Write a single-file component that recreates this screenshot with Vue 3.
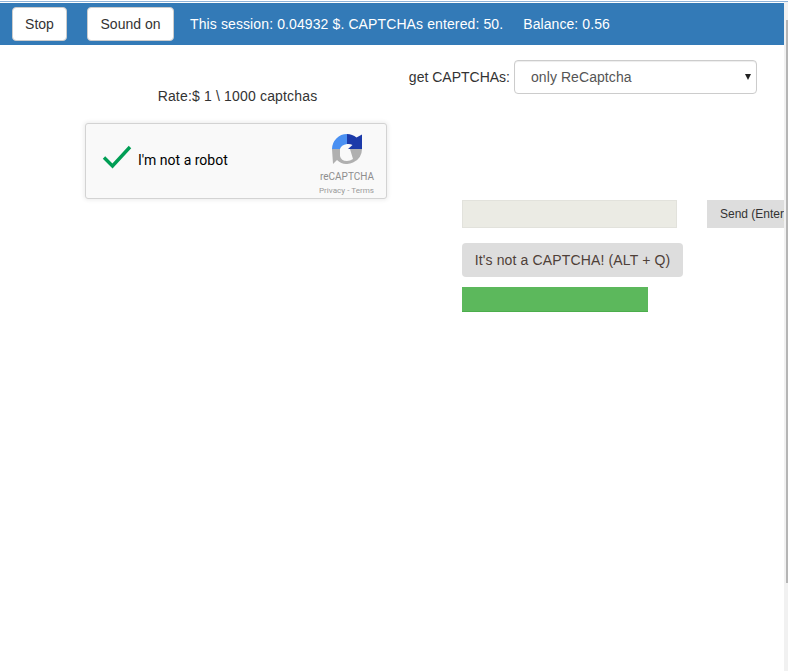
<script setup>
const stats = 'This session: 0.04932 $. CAPTCHAs entered: 50.'
</script>

<template>
  <div class="page">
    <div class="topline"></div>
    <div class="row">
      <main class="content">
        <header class="bar">
          <button class="btn stop" type="button">Stop</button>
          <button class="btn sound" type="button">Sound on</button>
          <span class="stats">{{ stats }}</span>
          <span class="balance">Balance: 0.56</span>
        </header>

        <div class="columns">
          <section class="left">
            <p class="rate">Rate:$ 1 \ 1000 captchas</p>
            <div class="recaptcha">
              <svg class="check" viewBox="0 0 30 24" width="30" height="24">
                <path d="M2 12.5 L10.5 21 L28 2" fill="none" stroke="#009e55" stroke-width="3.4" />
              </svg>
              <span class="robot">I'm not a robot</span>
              <div class="brand">
                <svg class="logo" viewBox="0 0 30 30" width="30" height="30">
                  <path d="M15 0 A15 15 0 0 0 0 15 H8 Q9 11 15 10 Z" fill="#4a90f2" />
                  <path d="M15 0 A15 15 0 0 1 24.5 3.5 L30 0.5 V15 H16 L20.5 11 Q18 9.5 15 10 Z" fill="#1c3aa9" />
                  <path d="M0 15 H8 V22 Q9 27 15 27 Q18 27 21 25 L18 15 H30 A15 15 0 0 1 5 26 L1 30 Z" fill="#b0b0b0" />
                </svg>
                <span class="brand-name">reCAPTCHA</span>
                <span class="brand-links">Privacy - Terms</span>
              </div>
            </div>
          </section>

          <section class="right">
            <div class="picker">
              <label class="picker-label" for="mode">get CAPTCHAs:</label>
              <div class="select" id="mode">
                <span class="select-value">only ReCaptcha</span>
                <span class="caret"></span>
              </div>
            </div>
            <div class="answer">
              <div class="field"></div>
              <button class="send" type="button">Send (Enter)</button>
            </div>
            <button class="skip" type="button">It's not a CAPTCHA! (ALT + Q)</button>
            <div class="progress"></div>
          </section>
        </div>
      </main>
      <aside class="scrollbar"><div class="thumb"></div></aside>
    </div>
  </div>
</template>

<style>
html, body { margin: 0; background: #fff; overflow: hidden; }
</style>

<style scoped>
.page {
  width: 788px;
  height: 671px;
  display: flex;
  flex-direction: column;
  overflow: hidden;
  background: #fff;
  font-family: "Liberation Sans", Arial, sans-serif;
  font-size: 14px;
  color: #333;
}
.topline { height: 1px; margin-top: 1px; background: #8fb3d9; flex: none; }
.row { display: flex; flex: 1; min-height: 0; }
.content {
  width: 784px;
  flex: none;
  overflow: hidden;
  padding-top: 1px;
  box-sizing: border-box;
}
.bar {
  height: 42px;
  background: #337ab7;
  display: flex;
  align-items: center;
  padding-left: 12px;
  box-sizing: border-box;
  color: #fff;
}
.btn {
  height: 34px;
  background: #fff;
  border: 1px solid #ccc;
  border-radius: 4px;
  font: inherit;
  color: #333;
  padding: 0;
}
.stop { width: 55px; }
.sound { width: 87px; margin-left: 20px; }
.stats { margin-left: 16px; white-space: nowrap; letter-spacing: .11px; }
.balance { margin-left: 20px; white-space: nowrap; letter-spacing: .08px; }
.columns { display: flex; }
.left { width: 462px; flex: none; padding-left: 85px; box-sizing: border-box; }
.rate { margin: 41px 0 0; width: 305px; text-align: center; line-height: 20px; letter-spacing: .17px; }
.recaptcha {
  width: 302px;
  height: 76px;
  margin-top: 17px;
  box-sizing: border-box;
  background: #f9f9f9;
  border: 1px solid #d3d3d3;
  border-radius: 3px;
  box-shadow: 0 0 4px 1px rgba(0, 0, 0, .08);
  display: flex;
  align-items: center;
  padding-left: 16px;
  position: relative;
  font-family: Roboto, "Liberation Sans", sans-serif;
}
.check { flex: none; margin-top: -8px; }
.robot { margin: -2px 0 0 6px; font-size: 14px; color: #000; }
.brand {
  position: absolute;
  right: 12px;
  top: 10px;
  display: flex;
  flex-direction: column;
  align-items: flex-end;
}
.logo { margin-right: 12px; }
.brand-name { font-size: 10px; color: #8e8e8e; margin-top: 7px; line-height: 12px; }
.brand-links { font-size: 8.1px; color: #9a9a9a; margin-top: 2px; line-height: 10px; }
.right { flex: 1; min-width: 0; position: relative; }
.picker {
  position: absolute;
  right: 27px;
  top: 15px;
  display: flex;
  align-items: center;
  white-space: nowrap;
}
.picker-label { margin-right: 4px; }
.select {
  width: 243px;
  height: 34px;
  box-sizing: border-box;
  border: 1px solid #ccc;
  border-radius: 4px;
  padding-left: 16px;
  color: #555;
  display: flex;
  align-items: center;
  justify-content: space-between;
  box-shadow: inset 0 1px 1px rgba(0, 0, 0, .075);
}
.select-value { letter-spacing: .07px; }
.caret {
  width: 0;
  height: 0;
  margin-right: 5px;
  border-left: 3.5px solid transparent;
  border-right: 3.5px solid transparent;
  border-top: 6px solid #222;
}
.answer { display: flex; margin-top: 155px; }
.field {
  width: 215px;
  height: 28px;
  flex: none;
  box-sizing: border-box;
  background: #ebebe4;
  border: 1px solid #e2e2dc;
}
.send {
  width: 110px;
  height: 28px;
  flex: none;
  margin-left: 30px;
  border: 0;
  background: #ddd;
  color: #333;
  font: 12px "Liberation Sans", Arial, sans-serif;
  white-space: nowrap;
  padding: 0 0 0 13px;
  text-align: left;
}
.skip {
  display: block;
  width: 221px;
  height: 34px;
  margin-top: 15px;
  border: 0;
  border-radius: 4px;
  background: #ddd;
  color: #4e4038;
  font: 14px "Liberation Sans", Arial, sans-serif;
  letter-spacing: .14px;
  padding: 0;
}
.progress {
  width: 186px;
  height: 25px;
  margin-top: 10px;
  background: #5cb85c;
  border-bottom: 1px solid #4cae4c;
  box-sizing: border-box;
}
.scrollbar { width: 4px; flex: none; background: #f1f1f1; display: flex; justify-content: flex-end; align-items: flex-start; }
.thumb { margin-top: 18px; width: 2px; height: 563px; background: #b5b5b5; }
</style>
